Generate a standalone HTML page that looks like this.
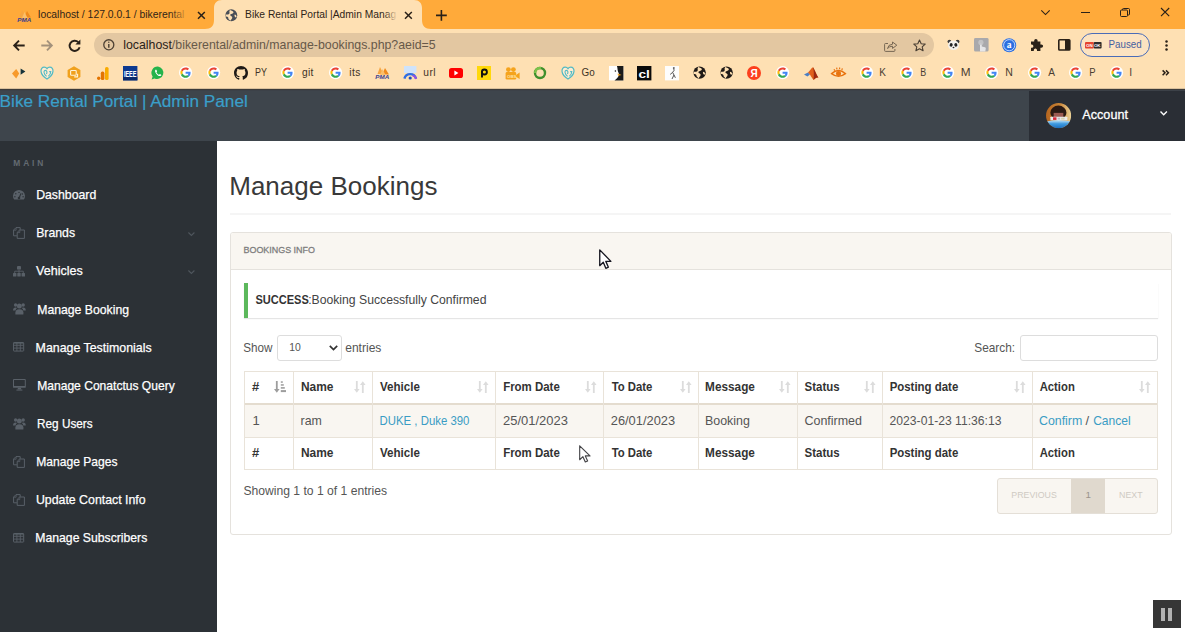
<!DOCTYPE html>
<html lang="en">
<head>
<meta charset="utf-8">
<title>Bike Rental Portal |Admin Manage Bookings</title>
<style>
*{box-sizing:border-box;margin:0;padding:0}
html,body{width:1185px;height:632px;overflow:hidden;background:#fff}
body{font-family:"Liberation Sans",sans-serif;font-size:13px;color:#444;position:relative}
.t{position:absolute;white-space:nowrap;transform-origin:0 50%;display:block}
.a{position:absolute}
svg{position:absolute;overflow:visible}
#tabbar{left:0;top:0;width:1185px;height:29px;background:#ffaa3a}
#toolbar{left:0;top:29px;width:1185px;height:59px;background:#fee0b3}
#chromeline{left:0;top:88px;width:1185px;height:3px;background:linear-gradient(#d9c09c 0,#d9c09c 33.3%,#3b3a39 33.3%,#3b3a39 66.6%,#3c4148 66.6%)}
#brand{left:0;top:89px;width:1185px;height:52px;background:#3e454c}
#acct{left:1029px;top:89px;width:156px;height:52px;background:#2a2e35}
#side{left:0;top:141px;width:217px;height:491px;background:#2c3136}
.vl{position:absolute;width:1px;background:#e9e3d9;top:371px;height:99px}
.hl{position:absolute;height:1px;background:#e9e3d9;left:244px;width:914px}
</style>
</head>
<body>
<div id="browser-chrome">
<div class="a" id="tabbar"></div><div class="a" id="toolbar"></div>
<svg style="left:205px;top:0" width="226" height="29" viewBox="0 0 226 29"><path d="M0 29 C6 29 9 26 9 20 L9 8 C9 3 12 0 17 0 L209 0 C214 0 217 3 217 8 L217 20 C217 26 220 29 226 29 Z" fill="#fee0b3"/></svg>
<span class="t" style="left:38px;top:9.41px;font-size:10.5px;line-height:10.5px;color:#2f2418;transform:translateX(0.08px) scaleX(0.9869);">localhost / 127.0.0.1 / bikerental</span>
<span class="t" style="left:245px;top:9.41px;font-size:10.5px;line-height:10.5px;color:#2f2418;transform:translateX(0.05px) scaleX(0.9779);">Bike Rental Portal |Admin Manag</span>
<div class="a" style="left:170px;top:6px;width:22px;height:18px;background:linear-gradient(90deg,rgba(255,170,58,0),#ffaa3a 85%)"></div>
<div class="a" style="left:384px;top:6px;width:15px;height:18px;background:linear-gradient(90deg,rgba(254,224,179,0),#fee0b3 90%)"></div>
<svg style="left:17px;top:9.5px" width="15" height="12" viewBox="0 0 15 12"><path d="M5 0 L8.5 7 L2.5 7Z" fill="#f7a541"/><path d="M10 1 L14 7.5 L7 7.5Z" fill="#f08a1c"/><path d="M7.5 2 L10.5 8 L5 8Z" fill="#fbbf6a"/><text x="0.3" y="11.6" font-family="Liberation Sans,sans-serif" font-size="5.2" font-weight="700" font-style="italic" fill="#3b3f8f" textLength="14" lengthAdjust="spacingAndGlyphs">PMA</text></svg>
<svg style="left:198.0px;top:11.5px" width="6.8" height="6.8" viewBox="0 0 6.8 6.8"><path d="M0 0L6.8 6.8M6.8 0L0 6.8" stroke="#2a2118" stroke-width="1.5" fill="none"/></svg>
<svg style="left:404.90000000000003px;top:11.5px" width="6.8" height="6.8" viewBox="0 0 6.8 6.8"><path d="M0 0L6.8 6.8M6.8 0L0 6.8" stroke="#2a2118" stroke-width="1.5" fill="none"/></svg>
<svg style="left:225.39999999999998px;top:8.7px" width="12.6" height="12.6" viewBox="-7 -7 14 14"><circle r="6.6" fill="#4a4f57"/><path d="M-1.5 -6 C-3 -4 -1 -3 -2.5 -1.5 C-4 -0.5 -5.5 -1.5 -6.4 -0.5 L-6.3 1.5 C-4 1 -3 2.5 -3.2 4 L-1 6.2 C0 4 1.5 3.5 1 1.8 C0 0.5 -1.5 1 -1.2 -0.8 C0 -2 2 -1.5 2.5 -3.5 C2 -5 0.5 -5 -1.5 -6Z M3.8 -1 C3 0.5 4 1.5 5 2.5 L6 1 C5.5 0 5 -1 3.8 -1Z" fill="#fee0b3"/></svg>
<svg style="left:436.3px;top:9.6px" width="10.8" height="10.8" viewBox="0 0 10.8 10.8"><path d="M5.4 0V10.8M0 5.4H10.8" stroke="#2a2118" stroke-width="1.6"/></svg>
<svg style="left:1041px;top:9.6px" width="9" height="5.4" viewBox="0 0 9 5.4"><path d="M0.3 0.4L4.5 4.6L8.7 0.4" stroke="#2a2118" stroke-width="1.1" fill="none"/></svg>
<div class="a" style="left:1081px;top:12px;width:9px;height:1px;background:#2a2118"></div>
<svg style="left:1120px;top:8px" width="10" height="9" viewBox="0 0 10 9"><rect x="0.5" y="2" width="7" height="6.5" rx="1" stroke="#2a2118" fill="none"/><path d="M2.5 2V1.5Q2.5 0.5 3.5 0.5H8.5Q9.5 0.5 9.5 1.5V6Q9.5 7 8.5 7H7.5" stroke="#2a2118" fill="none"/></svg>
<svg style="left:1161.1000000000001px;top:8.3px" width="8.2" height="8.2" viewBox="0 0 8.2 8.2"><path d="M0 0L8.2 8.2M8.2 0L0 8.2" stroke="#2a2118" stroke-width="1.15" fill="none"/></svg>
<svg style="left:13px;top:39.6px" width="12" height="11" viewBox="0 0 12 11"><path d="M11.7 5.5H1.6M6 0.7L1.2 5.5L6 10.3" stroke="#2a2118" stroke-width="1.9" fill="none"/></svg>
<svg style="left:40.7px;top:39.6px" width="12" height="11" viewBox="0 0 12 11"><path d="M0.3 5.5H10.4M6 0.7L10.8 5.5L6 10.3" stroke="#a3917b" stroke-width="1.9" fill="none"/></svg>
<svg style="left:68.3px;top:38.6px" width="13" height="13" viewBox="0 0 13 13"><path d="M10.3 3.2A5.1 5.1 0 1 0 11.6 8.2" stroke="#2a2118" stroke-width="1.9" fill="none"/><path d="M12.4 0.4V5.4H7.4Z" fill="#2a2118"/></svg>
<div class="a" style="left:94px;top:33px;width:840px;height:24px;border-radius:12px;background:#e3c7a1"></div>
<svg style="left:103.4px;top:39.2px" width="11.6" height="11.6" viewBox="0 0 12 12"><circle cx="6" cy="6" r="5.2" stroke="#4e4235" stroke-width="1.35" fill="none"/><path d="M6 5.2V9" stroke="#4e4235" stroke-width="1.5"/><circle cx="6" cy="3.4" r="0.8" fill="#5a4d3e"/></svg>
<span class="t" style="left:123px;top:39.20px;font-size:12.4px;line-height:12.4px;color:#675949;transform:translateX(0.14px) scaleX(0.9959);"><span style="color:#2a2118">localhost</span>/bikerental/admin/manage-bookings.php?aeid=5</span>
<svg style="left:884px;top:39.5px" width="14" height="12" viewBox="0 0 14 12"><path d="M4 3.5H1.5Q0.6 3.5 0.6 4.4V10.5Q0.6 11.4 1.5 11.4H10Q10.9 11.4 10.9 10.5V9" stroke="#776753" stroke-width="1" fill="none"/><path d="M3.5 8.5Q4 4.5 8.5 4.2V2L12.8 5.2L8.5 8.4V6.2Q5.5 6.2 3.5 8.5Z" stroke="#776753" stroke-width="1" fill="none" stroke-linejoin="round"/></svg>
<svg style="left:912.5px;top:38.8px" width="13" height="12.4" viewBox="0 0 13 12.4"><path d="M6.5 1L8.2 4.7L12.2 5.1L9.2 7.8L10.1 11.7L6.5 9.7L2.9 11.7L3.8 7.8L0.8 5.1L4.8 4.7Z" stroke="#4a3f33" stroke-width="1.1" fill="none" stroke-linejoin="round"/></svg>
<svg style="left:946.6px;top:38.9px" width="13" height="11.6" viewBox="0 0 15 13"><circle cx="2.8" cy="2.8" r="2.2" fill="#3a3a3a"/><circle cx="12.2" cy="2.8" r="2.2" fill="#3a3a3a"/><ellipse cx="7.5" cy="7" rx="6.3" ry="5.6" fill="#f4f1ec"/><ellipse cx="4.8" cy="6.6" rx="1.7" ry="2.1" fill="#222" transform="rotate(20 4.8 6.6)"/><ellipse cx="10.2" cy="6.6" rx="1.7" ry="2.1" fill="#222" transform="rotate(-20 10.2 6.6)"/><ellipse cx="7.5" cy="9.6" rx="1.1" ry="0.8" fill="#222"/></svg>
<svg style="left:973.8px;top:38.4px" width="14.6" height="13.6" viewBox="0 0 14.6 13.6"><rect width="14.6" height="13.6" rx="1.5" fill="#a9a9ac"/><path d="M6 13.6V6.2Q6 5.2 6.9 5.2Q7.8 5.2 7.8 6.2V8.4L11 9.2Q12 9.5 11.8 10.6L11.3 13.6Z" fill="#e6e6e8"/><circle cx="6.9" cy="4.4" r="2.6" fill="#c9c9cc" opacity=".8"/></svg>
<svg style="left:1001.8px;top:37.8px" width="14.4" height="14.4" viewBox="0 0 14.4 14.4"><circle cx="7.2" cy="7.2" r="7" fill="#2b6fe0"/><circle cx="7.2" cy="7.2" r="5.6" fill="none" stroke="#cfe0ff" stroke-width="0.9"/><text x="7.2" y="10.3" text-anchor="middle" font-family="Liberation Serif,serif" font-size="9.5" font-weight="700" fill="#fff">a</text></svg>
<svg style="left:1029.5px;top:38.3px" width="14" height="13.6" viewBox="0 0 14 13.6"><path d="M1 3.6H4.2V2.6A1.7 1.7 0 0 1 7.6 2.6V3.6H10.4V6.4H11.4A1.7 1.7 0 0 1 11.4 9.8H10.4V13H7V12A1.6 1.6 0 0 0 3.8 12V13H1V9.8H1.8A1.6 1.6 0 0 0 1.8 6.6H1Z" fill="#2a2118"/></svg>
<svg style="left:1058px;top:39px" width="12.6" height="11.8" viewBox="0 0 12.6 11.8"><rect x="0.8" y="0.8" width="11" height="10.2" rx="0.8" stroke="#2a2118" stroke-width="1.6" fill="none"/><rect x="7" y="0.8" width="4.8" height="10.2" fill="#2a2118"/></svg>
<div class="a" style="left:1080px;top:33px;width:70px;height:24px;border-radius:12px;border:1px solid #4a6cb8;background:#fce3c1"></div>
<svg style="left:1084.6px;top:42px" width="16.6" height="6.4" viewBox="0 0 17 7.4" preserveAspectRatio="none"><rect width="9" height="7.4" rx="1" fill="#e5432d"/><rect x="9" width="8" height="7.4" rx="1" fill="#2b2b2b"/><text x="1" y="5.6" font-family="Liberation Sans,sans-serif" font-size="4.6" font-weight="700" fill="#fff" textLength="15" lengthAdjust="spacingAndGlyphs">ON OK</text></svg>
<span class="t" style="left:1108px;top:39.80px;font-size:10.4px;line-height:10.4px;color:#44609f;transform:translateX(0.59px) scaleX(0.9381);">Paused</span>
<svg style="left:1165px;top:40.4px" width="3" height="11" viewBox="0 0 3 11"><circle cx="1.5" cy="1.4" r="1.25" fill="#2a2118"/><circle cx="1.5" cy="5.5" r="1.25" fill="#2a2118"/><circle cx="1.5" cy="9.6" r="1.25" fill="#2a2118"/></svg>
<svg style="left:12px;top:67.0px" width="14" height="12" viewBox="0 0 14 12"><path d="M0 6.6L4.2 2L7.2 6.6L4.2 11.6Z" fill="#f79a2b"/><path d="M8.6 1.4L13.4 4.6L8.6 7.8Z" fill="#17343b"/></svg>
<svg style="left:39.8px;top:66.0px" width="14" height="14" viewBox="-7 -7 14 14"><path d="M0 6C-8 1.5 -7 -5.8 -2.8 -5.8C-1 -5.8 0 -4.4 0 -4.4C0 -4.4 1 -5.8 2.8 -5.8C7 -5.8 8 1.5 0 6Z" fill="rgba(255,255,255,.4)" stroke="#52bac4" stroke-width="1.2"/><path d="M-0.4 3.4C-3.6 1 -3.6 -2.6 -1.6 -2.6C0 -2.6 0.4 -0.6 -0.6 1M2.2 -1.4H3.8C3.8 0.8 2.8 2.2 1.4 3.2" stroke="#52bac4" stroke-width="1.1" fill="none"/></svg>
<svg style="left:67px;top:65.5px" width="14" height="15" viewBox="-7 -7.5 14 15"><path d="M0 -7.3L6.4 -3.6V3.6L0 7.3L-6.4 3.6V-3.6Z" fill="#f0a11d"/><rect x="-3.4" y="-3" width="5.6" height="4.8" rx="0.8" fill="none" stroke="#fff3d6" stroke-width="1.1"/><path d="M0.2 3.4H3.6V0.2" stroke="#fff3d6" stroke-width="1.1" fill="none"/></svg>
<svg style="left:96.5px;top:66.5px" width="12" height="13" viewBox="0 0 12 13"><rect x="8" y="0" width="3.6" height="13" rx="1.6" fill="#f9ab00"/><rect x="3.8" y="4.6" width="3.6" height="8.4" rx="1.6" fill="#e37400"/><circle cx="1.7" cy="11.3" r="1.7" fill="#e37400"/></svg>
<svg style="left:122.8px;top:65.8px" width="14.4" height="14.4" viewBox="0 0 14.4 14.4"><rect width="14.4" height="14.4" fill="#0c3990"/><rect y="10.6" width="14.4" height="3.8" fill="#0a2a6c"/><text x="0.9" y="10.6" font-family="Liberation Sans,sans-serif" font-size="9.4" font-weight="700" fill="#fff" textLength="12.6" lengthAdjust="spacingAndGlyphs">IEEE</text></svg>
<svg style="left:150.5px;top:66.0px" width="14" height="14" viewBox="-7 -7 14 14"><path d="M0 -6.4A6.2 6.2 0 1 1 -3.4 5.4L-6.4 6.4L-5.4 3.4A6.2 6.2 0 0 1 0 -6.4Z" fill="#25b34b"/><path d="M-2.6 -3.2C-3.6 -2 -2.4 0.6 -0.4 2.2C1.4 3.6 3 3.2 3.4 2L2 1L1 1.8C0 1.4 -1.2 0.2 -1.6 -0.8L-0.9 -1.6L-1.6 -3.2Z" fill="#fff"/></svg>
<svg style="left:179.0px;top:66.4px" width="13.2" height="13.2" viewBox="0 0 13.2 13.2"><circle cx="6.6" cy="6.6" r="6.6" fill="#fff"/><g transform="translate(1.40 1.40) scale(0.2167)"><path fill="#EA4335" d="M24 9.5c3.54 0 6.71 1.22 9.21 3.6l6.85-6.85C35.9 2.38 30.47 0 24 0 14.62 0 6.51 5.38 2.56 13.22l7.98 6.19C12.43 13.72 17.74 9.5 24 9.5z"/><path fill="#4285F4" d="M46.98 24.55c0-1.57-.15-3.09-.38-4.55H24v9.02h12.94c-.58 2.96-2.26 5.48-4.78 7.18l7.73 6c4.51-4.18 7.09-10.36 7.09-17.65z"/><path fill="#FBBC05" d="M10.53 28.59c-.48-1.45-.76-2.99-.76-4.59s.27-3.14.76-4.59l-7.98-6.19C.92 16.46 0 20.12 0 24c0 3.88.92 7.54 2.56 10.78l7.97-6.19z"/><path fill="#34A853" d="M24 48c6.48 0 11.93-2.13 15.89-5.81l-7.73-6c-2.15 1.45-4.92 2.3-8.16 2.3-6.26 0-11.57-4.22-13.47-9.91l-7.98 6.19C6.51 42.62 14.62 48 24 48z"/></g></svg>
<svg style="left:207.1px;top:66.4px" width="13.2" height="13.2" viewBox="0 0 13.2 13.2"><circle cx="6.6" cy="6.6" r="6.6" fill="#fff"/><g transform="translate(1.40 1.40) scale(0.2167)"><path fill="#EA4335" d="M24 9.5c3.54 0 6.71 1.22 9.21 3.6l6.85-6.85C35.9 2.38 30.47 0 24 0 14.62 0 6.51 5.38 2.56 13.22l7.98 6.19C12.43 13.72 17.74 9.5 24 9.5z"/><path fill="#4285F4" d="M46.98 24.55c0-1.57-.15-3.09-.38-4.55H24v9.02h12.94c-.58 2.96-2.26 5.48-4.78 7.18l7.73 6c4.51-4.18 7.09-10.36 7.09-17.65z"/><path fill="#FBBC05" d="M10.53 28.59c-.48-1.45-.76-2.99-.76-4.59s.27-3.14.76-4.59l-7.98-6.19C.92 16.46 0 20.12 0 24c0 3.88.92 7.54 2.56 10.78l7.97-6.19z"/><path fill="#34A853" d="M24 48c6.48 0 11.93-2.13 15.89-5.81l-7.73-6c-2.15 1.45-4.92 2.3-8.16 2.3-6.26 0-11.57-4.22-13.47-9.91l-7.98 6.19C6.51 42.62 14.62 48 24 48z"/></g></svg>
<svg style="left:233.5px;top:66.0px" width="14" height="14" viewBox="0 0 16 16"><path d="M8 0C3.58 0 0 3.58 0 8c0 3.54 2.29 6.53 5.47 7.59.4.07.55-.17.55-.38 0-.19-.01-.82-.01-1.49-2.01.37-2.53-.49-2.69-.94-.09-.23-.48-.94-.82-1.13-.28-.15-.68-.52-.01-.53.63-.01 1.08.58 1.23.82.72 1.21 1.87.87 2.33.66.07-.52.28-.87.51-1.07-1.78-.2-3.64-.89-3.64-3.95 0-.87.31-1.59.82-2.15-.08-.2-.36-1.02.08-2.12 0 0 .67-.21 2.2.82.64-.18 1.32-.27 2-.27s1.36.09 2 .27c1.53-1.04 2.2-.82 2.2-.82.44 1.1.16 1.92.08 2.12.51.56.82 1.27.82 2.15 0 3.07-1.87 3.75-3.65 3.95.29.25.54.73.54 1.48 0 1.07-.01 1.93-.01 2.2 0 .21.15.46.55.38A8.01 8.01 0 0016 8c0-4.42-3.58-8-8-8z" fill="#1f1a17"/></svg>
<span class="t" style="left:255px;top:67.67px;font-size:10.2px;line-height:10.2px;color:#3d3226;transform:translateX(0.05px) scaleX(0.8783);">PY</span>
<svg style="left:281.4px;top:66.4px" width="13.2" height="13.2" viewBox="0 0 13.2 13.2"><circle cx="6.6" cy="6.6" r="6.6" fill="#fff"/><g transform="translate(1.40 1.40) scale(0.2167)"><path fill="#EA4335" d="M24 9.5c3.54 0 6.71 1.22 9.21 3.6l6.85-6.85C35.9 2.38 30.47 0 24 0 14.62 0 6.51 5.38 2.56 13.22l7.98 6.19C12.43 13.72 17.74 9.5 24 9.5z"/><path fill="#4285F4" d="M46.98 24.55c0-1.57-.15-3.09-.38-4.55H24v9.02h12.94c-.58 2.96-2.26 5.48-4.78 7.18l7.73 6c4.51-4.18 7.09-10.36 7.09-17.65z"/><path fill="#FBBC05" d="M10.53 28.59c-.48-1.45-.76-2.99-.76-4.59s.27-3.14.76-4.59l-7.98-6.19C.92 16.46 0 20.12 0 24c0 3.88.92 7.54 2.56 10.78l7.97-6.19z"/><path fill="#34A853" d="M24 48c6.48 0 11.93-2.13 15.89-5.81l-7.73-6c-2.15 1.45-4.92 2.3-8.16 2.3-6.26 0-11.57-4.22-13.47-9.91l-7.98 6.19C6.51 42.62 14.62 48 24 48z"/></g></svg>
<span class="t" style="left:301px;top:67.67px;font-size:10.2px;line-height:10.2px;color:#3d3226;letter-spacing:0.35px;transform:translateX(0.90px);">git</span>
<svg style="left:329.4px;top:66.4px" width="13.2" height="13.2" viewBox="0 0 13.2 13.2"><circle cx="6.6" cy="6.6" r="6.6" fill="#fff"/><g transform="translate(1.40 1.40) scale(0.2167)"><path fill="#EA4335" d="M24 9.5c3.54 0 6.71 1.22 9.21 3.6l6.85-6.85C35.9 2.38 30.47 0 24 0 14.62 0 6.51 5.38 2.56 13.22l7.98 6.19C12.43 13.72 17.74 9.5 24 9.5z"/><path fill="#4285F4" d="M46.98 24.55c0-1.57-.15-3.09-.38-4.55H24v9.02h12.94c-.58 2.96-2.26 5.48-4.78 7.18l7.73 6c4.51-4.18 7.09-10.36 7.09-17.65z"/><path fill="#FBBC05" d="M10.53 28.59c-.48-1.45-.76-2.99-.76-4.59s.27-3.14.76-4.59l-7.98-6.19C.92 16.46 0 20.12 0 24c0 3.88.92 7.54 2.56 10.78l7.97-6.19z"/><path fill="#34A853" d="M24 48c6.48 0 11.93-2.13 15.89-5.81l-7.73-6c-2.15 1.45-4.92 2.3-8.16 2.3-6.26 0-11.57-4.22-13.47-9.91l-7.98 6.19C6.51 42.62 14.62 48 24 48z"/></g></svg>
<span class="t" style="left:349px;top:67.67px;font-size:10.2px;line-height:10.2px;color:#3d3226;letter-spacing:0.45px;transform:translateX(0.20px);">its</span>
<svg style="left:374.5px;top:66.7px" width="15" height="12" viewBox="0 0 15 12"><path d="M5 0 L8.5 7 L2.5 7Z" fill="#f7a541"/><path d="M10 1 L14 7.5 L7 7.5Z" fill="#f08a1c"/><path d="M7.5 2 L10.5 8 L5 8Z" fill="#fbbf6a"/><text x="0.3" y="11.6" font-family="Liberation Sans,sans-serif" font-size="5.2" font-weight="700" font-style="italic" fill="#3b3f8f" textLength="14" lengthAdjust="spacingAndGlyphs">PMA</text></svg>
<svg style="left:402.5px;top:66.0px" width="14.4" height="14" viewBox="0 0 14.4 14"><rect x="1" y="0" width="12.4" height="7" fill="#cfe3fb"/><path d="M1.4 12.6A6 6 0 0 1 13 12.6" stroke="#2f6fe4" stroke-width="2.4" fill="none"/><path d="M9.6 9.4A5.6 5.6 0 0 1 13.2 13" stroke="#9b4de0" stroke-width="2" fill="none"/><circle cx="7.2" cy="12" r="1.6" fill="#1c4fc0"/></svg>
<span class="t" style="left:423px;top:67.67px;font-size:10.2px;line-height:10.2px;color:#3d3226;letter-spacing:0.45px;transform:translateX(0.30px);">url</span>
<svg style="left:449px;top:68.0px" width="14" height="10" viewBox="0 0 14 10"><rect width="14" height="10" rx="2.6" fill="#f00"/><path d="M5.4 2.6L9.4 5L5.4 7.4Z" fill="#fff"/></svg>
<svg style="left:477px;top:66.0px" width="14" height="14" viewBox="0 0 14 14"><rect width="14" height="14" fill="#ffd80a"/><circle cx="7.4" cy="6" r="2.5" fill="none" stroke="#111" stroke-width="1.9"/><path d="M5 5V11.4" stroke="#111" stroke-width="1.9"/></svg>
<svg style="left:504.5px;top:66.5px" width="15" height="13" viewBox="0 0 15 13"><circle cx="3.4" cy="2.6" r="2.4" fill="#f5a31c"/><circle cx="8.4" cy="2.6" r="2.4" fill="#f5a31c"/><rect x="0.6" y="5" width="10.6" height="7.6" rx="1.4" fill="#f5a31c"/><path d="M11 8L14.6 5.6V12L11 9.8Z" fill="#f5a31c"/><text x="2" y="11" font-family="Liberation Sans,sans-serif" font-size="4.4" font-weight="700" fill="#ffe2a6">OBS</text></svg>
<svg style="left:532.5px;top:66.0px" width="14" height="14" viewBox="-7 -7 14 14"><circle r="5" fill="none" stroke="#3f8f2c" stroke-width="2.4"/><path d="M-5 0A5 5 0 0 1 1 -4.9" stroke="#7cc24a" stroke-width="2.4" fill="none"/></svg>
<svg style="left:560.5px;top:66.0px" width="14" height="14" viewBox="-7 -7 14 14"><path d="M0 6C-8 1.5 -7 -5.8 -2.8 -5.8C-1 -5.8 0 -4.4 0 -4.4C0 -4.4 1 -5.8 2.8 -5.8C7 -5.8 8 1.5 0 6Z" fill="rgba(255,255,255,.4)" stroke="#52bac4" stroke-width="1.2"/><path d="M-0.4 3.4C-3.6 1 -3.6 -2.6 -1.6 -2.6C0 -2.6 0.4 -0.6 -0.6 1M2.2 -1.4H3.8C3.8 0.8 2.8 2.2 1.4 3.2" stroke="#52bac4" stroke-width="1.1" fill="none"/></svg>
<span class="t" style="left:581px;top:67.67px;font-size:10.2px;line-height:10.2px;color:#3d3226;transform:translateX(0.47px) scaleX(0.9713);">Go</span>
<svg style="left:609px;top:65.8px" width="14.4" height="14.4" viewBox="0 0 14.4 14.4"><rect width="14.4" height="14.4" fill="#fff"/><path d="M8 0H14.4V14.4H5.5C9 12 11 9 9.4 6.4C8.4 4.6 8.6 2 8 0Z" fill="#1a1a1a"/><path d="M8.6 7.4L12.6 9L9 9.8Z" fill="#f5a623"/><circle cx="6.4" cy="5" r="0.8" fill="#1a1a1a"/></svg>
<svg style="left:636.8px;top:65.8px" width="14.4" height="14.4" viewBox="0 0 14.4 14.4"><rect width="14.4" height="14.4" fill="#0a0a0a"/><text x="1.4" y="11.6" font-family="Liberation Sans,sans-serif" font-size="11.5" font-weight="700" fill="#fff" textLength="11.4" lengthAdjust="spacingAndGlyphs">cl</text></svg>
<svg style="left:664.6px;top:65.8px" width="14" height="14.4" viewBox="0 0 14 14.4"><rect width="14" height="14.4" fill="#fdfdfd"/><path d="M8.4 2.2L9.2 4.2L7.6 6.4L9 9L7 13M7.6 6.4L5.2 8.4M9 9L10.4 11.8" stroke="#555" stroke-width="1" fill="none"/><circle cx="8.8" cy="2" r="1" fill="#666"/></svg>
<svg style="left:692.6px;top:66.4px" width="13.2" height="13.2" viewBox="-7 -7 14 14"><circle r="6.6" fill="#1f1a17"/><path d="M-1.5 -6 C-3 -4 -1 -3 -2.5 -1.5 C-4 -0.5 -5.5 -1.5 -6.4 -0.5 L-6.3 1.5 C-4 1 -3 2.5 -3.2 4 L-1 6.2 C0 4 1.5 3.5 1 1.8 C0 0.5 -1.5 1 -1.2 -0.8 C0 -2 2 -1.5 2.5 -3.5 C2 -5 0.5 -5 -1.5 -6Z M3.8 -1 C3 0.5 4 1.5 5 2.5 L6 1 C5.5 0 5 -1 3.8 -1Z" fill="#fee0b3"/></svg>
<svg style="left:720.4px;top:66.4px" width="13.2" height="13.2" viewBox="-7 -7 14 14"><circle r="6.6" fill="#1f1a17"/><path d="M-1.5 -6 C-3 -4 -1 -3 -2.5 -1.5 C-4 -0.5 -5.5 -1.5 -6.4 -0.5 L-6.3 1.5 C-4 1 -3 2.5 -3.2 4 L-1 6.2 C0 4 1.5 3.5 1 1.8 C0 0.5 -1.5 1 -1.2 -0.8 C0 -2 2 -1.5 2.5 -3.5 C2 -5 0.5 -5 -1.5 -6Z M3.8 -1 C3 0.5 4 1.5 5 2.5 L6 1 C5.5 0 5 -1 3.8 -1Z" fill="#fee0b3"/></svg>
<svg style="left:747.4px;top:66.0px" width="14" height="14" viewBox="0 0 14 14"><circle cx="7" cy="7" r="7" fill="#fc3f1d"/><text x="7" y="10.8" text-anchor="middle" font-family="Liberation Sans,sans-serif" font-size="10" font-weight="700" fill="#fff">Я</text></svg>
<svg style="left:776.0px;top:66.4px" width="13.2" height="13.2" viewBox="0 0 13.2 13.2"><circle cx="6.6" cy="6.6" r="6.6" fill="#fff"/><g transform="translate(1.40 1.40) scale(0.2167)"><path fill="#EA4335" d="M24 9.5c3.54 0 6.71 1.22 9.21 3.6l6.85-6.85C35.9 2.38 30.47 0 24 0 14.62 0 6.51 5.38 2.56 13.22l7.98 6.19C12.43 13.72 17.74 9.5 24 9.5z"/><path fill="#4285F4" d="M46.98 24.55c0-1.57-.15-3.09-.38-4.55H24v9.02h12.94c-.58 2.96-2.26 5.48-4.78 7.18l7.73 6c4.51-4.18 7.09-10.36 7.09-17.65z"/><path fill="#FBBC05" d="M10.53 28.59c-.48-1.45-.76-2.99-.76-4.59s.27-3.14.76-4.59l-7.98-6.19C.92 16.46 0 20.12 0 24c0 3.88.92 7.54 2.56 10.78l7.97-6.19z"/><path fill="#34A853" d="M24 48c6.48 0 11.93-2.13 15.89-5.81l-7.73-6c-2.15 1.45-4.92 2.3-8.16 2.3-6.26 0-11.57-4.22-13.47-9.91l-7.98 6.19C6.51 42.62 14.62 48 24 48z"/></g></svg>
<svg style="left:803.5px;top:66.5px" width="14.4" height="13" viewBox="0 0 14.4 13"><path d="M0 7.4L4 5.4L6 7.6L3.4 9.6Z" fill="#4b7fc4"/><path d="M4 5.4C6 4 7.4 0.6 9 0.2C10.6 2 12 7 14.4 10.6C12 10 10.6 12 9.6 13C8 11 6.6 9.4 6 7.6Z" fill="#e0601c"/><path d="M9 0.2C10 3 10 8 9.6 13C10.6 12 12 10 14.4 10.6C12 7 10.6 2 9 0.2Z" fill="#9b2a12"/></svg>
<svg style="left:830.5px;top:66.0px" width="15" height="13" viewBox="0 0 15 13"><path d="M0.6 7.6Q7.5 1.6 14.4 7.6Q7.5 13 0.6 7.6Z" fill="none" stroke="#e8730f" stroke-width="1.4"/><circle cx="7.5" cy="7.4" r="2.5" fill="#e8730f"/><path d="M3 3.2L3.8 4.6M5.6 1.6L6 3.4M8.6 1.4L8.6 3.2M11.4 2.4L10.8 4" stroke="#e8730f" stroke-width="1.2"/></svg>
<svg style="left:859.7px;top:66.4px" width="13.2" height="13.2" viewBox="0 0 13.2 13.2"><circle cx="6.6" cy="6.6" r="6.6" fill="#fff"/><g transform="translate(1.40 1.40) scale(0.2167)"><path fill="#EA4335" d="M24 9.5c3.54 0 6.71 1.22 9.21 3.6l6.85-6.85C35.9 2.38 30.47 0 24 0 14.62 0 6.51 5.38 2.56 13.22l7.98 6.19C12.43 13.72 17.74 9.5 24 9.5z"/><path fill="#4285F4" d="M46.98 24.55c0-1.57-.15-3.09-.38-4.55H24v9.02h12.94c-.58 2.96-2.26 5.48-4.78 7.18l7.73 6c4.51-4.18 7.09-10.36 7.09-17.65z"/><path fill="#FBBC05" d="M10.53 28.59c-.48-1.45-.76-2.99-.76-4.59s.27-3.14.76-4.59l-7.98-6.19C.92 16.46 0 20.12 0 24c0 3.88.92 7.54 2.56 10.78l7.97-6.19z"/><path fill="#34A853" d="M24 48c6.48 0 11.93-2.13 15.89-5.81l-7.73-6c-2.15 1.45-4.92 2.3-8.16 2.3-6.26 0-11.57-4.22-13.47-9.91l-7.98 6.19C6.51 42.62 14.62 48 24 48z"/></g></svg>
<span class="t" style="left:879px;top:67.58px;font-size:10.3px;line-height:10.3px;color:#4a3e32;transform:translateX(0.23px) scaleX(0.9692);">K</span>
<svg style="left:900.3px;top:66.4px" width="13.2" height="13.2" viewBox="0 0 13.2 13.2"><circle cx="6.6" cy="6.6" r="6.6" fill="#fff"/><g transform="translate(1.40 1.40) scale(0.2167)"><path fill="#EA4335" d="M24 9.5c3.54 0 6.71 1.22 9.21 3.6l6.85-6.85C35.9 2.38 30.47 0 24 0 14.62 0 6.51 5.38 2.56 13.22l7.98 6.19C12.43 13.72 17.74 9.5 24 9.5z"/><path fill="#4285F4" d="M46.98 24.55c0-1.57-.15-3.09-.38-4.55H24v9.02h12.94c-.58 2.96-2.26 5.48-4.78 7.18l7.73 6c4.51-4.18 7.09-10.36 7.09-17.65z"/><path fill="#FBBC05" d="M10.53 28.59c-.48-1.45-.76-2.99-.76-4.59s.27-3.14.76-4.59l-7.98-6.19C.92 16.46 0 20.12 0 24c0 3.88.92 7.54 2.56 10.78l7.97-6.19z"/><path fill="#34A853" d="M24 48c6.48 0 11.93-2.13 15.89-5.81l-7.73-6c-2.15 1.45-4.92 2.3-8.16 2.3-6.26 0-11.57-4.22-13.47-9.91l-7.98 6.19C6.51 42.62 14.62 48 24 48z"/></g></svg>
<span class="t" style="left:920px;top:67.58px;font-size:10.3px;line-height:10.3px;color:#4a3e32;transform:translateX(0.16px) scaleX(0.8665);">B</span>
<svg style="left:940.9px;top:66.4px" width="13.2" height="13.2" viewBox="0 0 13.2 13.2"><circle cx="6.6" cy="6.6" r="6.6" fill="#fff"/><g transform="translate(1.40 1.40) scale(0.2167)"><path fill="#EA4335" d="M24 9.5c3.54 0 6.71 1.22 9.21 3.6l6.85-6.85C35.9 2.38 30.47 0 24 0 14.62 0 6.51 5.38 2.56 13.22l7.98 6.19C12.43 13.72 17.74 9.5 24 9.5z"/><path fill="#4285F4" d="M46.98 24.55c0-1.57-.15-3.09-.38-4.55H24v9.02h12.94c-.58 2.96-2.26 5.48-4.78 7.18l7.73 6c4.51-4.18 7.09-10.36 7.09-17.65z"/><path fill="#FBBC05" d="M10.53 28.59c-.48-1.45-.76-2.99-.76-4.59s.27-3.14.76-4.59l-7.98-6.19C.92 16.46 0 20.12 0 24c0 3.88.92 7.54 2.56 10.78l7.97-6.19z"/><path fill="#34A853" d="M24 48c6.48 0 11.93-2.13 15.89-5.81l-7.73-6c-2.15 1.45-4.92 2.3-8.16 2.3-6.26 0-11.57-4.22-13.47-9.91l-7.98 6.19C6.51 42.62 14.62 48 24 48z"/></g></svg>
<span class="t" style="left:960px;top:67.58px;font-size:10.3px;line-height:10.3px;color:#4a3e32;transform:translateX(0.85px) scaleX(1.1415);">M</span>
<svg style="left:984.7px;top:66.4px" width="13.2" height="13.2" viewBox="0 0 13.2 13.2"><circle cx="6.6" cy="6.6" r="6.6" fill="#fff"/><g transform="translate(1.40 1.40) scale(0.2167)"><path fill="#EA4335" d="M24 9.5c3.54 0 6.71 1.22 9.21 3.6l6.85-6.85C35.9 2.38 30.47 0 24 0 14.62 0 6.51 5.38 2.56 13.22l7.98 6.19C12.43 13.72 17.74 9.5 24 9.5z"/><path fill="#4285F4" d="M46.98 24.55c0-1.57-.15-3.09-.38-4.55H24v9.02h12.94c-.58 2.96-2.26 5.48-4.78 7.18l7.73 6c4.51-4.18 7.09-10.36 7.09-17.65z"/><path fill="#FBBC05" d="M10.53 28.59c-.48-1.45-.76-2.99-.76-4.59s.27-3.14.76-4.59l-7.98-6.19C.92 16.46 0 20.12 0 24c0 3.88.92 7.54 2.56 10.78l7.97-6.19z"/><path fill="#34A853" d="M24 48c6.48 0 11.93-2.13 15.89-5.81l-7.73-6c-2.15 1.45-4.92 2.3-8.16 2.3-6.26 0-11.57-4.22-13.47-9.91l-7.98 6.19C6.51 42.62 14.62 48 24 48z"/></g></svg>
<span class="t" style="left:1005px;top:67.58px;font-size:10.3px;line-height:10.3px;color:#4a3e32;transform:translateX(0.17px) scaleX(1.0210);">N</span>
<svg style="left:1027.6px;top:66.4px" width="13.2" height="13.2" viewBox="0 0 13.2 13.2"><circle cx="6.6" cy="6.6" r="6.6" fill="#fff"/><g transform="translate(1.40 1.40) scale(0.2167)"><path fill="#EA4335" d="M24 9.5c3.54 0 6.71 1.22 9.21 3.6l6.85-6.85C35.9 2.38 30.47 0 24 0 14.62 0 6.51 5.38 2.56 13.22l7.98 6.19C12.43 13.72 17.74 9.5 24 9.5z"/><path fill="#4285F4" d="M46.98 24.55c0-1.57-.15-3.09-.38-4.55H24v9.02h12.94c-.58 2.96-2.26 5.48-4.78 7.18l7.73 6c4.51-4.18 7.09-10.36 7.09-17.65z"/><path fill="#FBBC05" d="M10.53 28.59c-.48-1.45-.76-2.99-.76-4.59s.27-3.14.76-4.59l-7.98-6.19C.92 16.46 0 20.12 0 24c0 3.88.92 7.54 2.56 10.78l7.97-6.19z"/><path fill="#34A853" d="M24 48c6.48 0 11.93-2.13 15.89-5.81l-7.73-6c-2.15 1.45-4.92 2.3-8.16 2.3-6.26 0-11.57-4.22-13.47-9.91l-7.98 6.19C6.51 42.62 14.62 48 24 48z"/></g></svg>
<span class="t" style="left:1048px;top:67.58px;font-size:10.3px;line-height:10.3px;color:#4a3e32;transform:translateX(0.19px) scaleX(0.9753);">A</span>
<svg style="left:1069.3px;top:66.4px" width="13.2" height="13.2" viewBox="0 0 13.2 13.2"><circle cx="6.6" cy="6.6" r="6.6" fill="#fff"/><g transform="translate(1.40 1.40) scale(0.2167)"><path fill="#EA4335" d="M24 9.5c3.54 0 6.71 1.22 9.21 3.6l6.85-6.85C35.9 2.38 30.47 0 24 0 14.62 0 6.51 5.38 2.56 13.22l7.98 6.19C12.43 13.72 17.74 9.5 24 9.5z"/><path fill="#4285F4" d="M46.98 24.55c0-1.57-.15-3.09-.38-4.55H24v9.02h12.94c-.58 2.96-2.26 5.48-4.78 7.18l7.73 6c4.51-4.18 7.09-10.36 7.09-17.65z"/><path fill="#FBBC05" d="M10.53 28.59c-.48-1.45-.76-2.99-.76-4.59s.27-3.14.76-4.59l-7.98-6.19C.92 16.46 0 20.12 0 24c0 3.88.92 7.54 2.56 10.78l7.97-6.19z"/><path fill="#34A853" d="M24 48c6.48 0 11.93-2.13 15.89-5.81l-7.73-6c-2.15 1.45-4.92 2.3-8.16 2.3-6.26 0-11.57-4.22-13.47-9.91l-7.98 6.19C6.51 42.62 14.62 48 24 48z"/></g></svg>
<span class="t" style="left:1089px;top:67.58px;font-size:10.3px;line-height:10.3px;color:#4a3e32;transform:translateX(0.31px) scaleX(0.9180);">P</span>
<svg style="left:1110.2px;top:66.4px" width="13.2" height="13.2" viewBox="0 0 13.2 13.2"><circle cx="6.6" cy="6.6" r="6.6" fill="#fff"/><g transform="translate(1.40 1.40) scale(0.2167)"><path fill="#EA4335" d="M24 9.5c3.54 0 6.71 1.22 9.21 3.6l6.85-6.85C35.9 2.38 30.47 0 24 0 14.62 0 6.51 5.38 2.56 13.22l7.98 6.19C12.43 13.72 17.74 9.5 24 9.5z"/><path fill="#4285F4" d="M46.98 24.55c0-1.57-.15-3.09-.38-4.55H24v9.02h12.94c-.58 2.96-2.26 5.48-4.78 7.18l7.73 6c4.51-4.18 7.09-10.36 7.09-17.65z"/><path fill="#FBBC05" d="M10.53 28.59c-.48-1.45-.76-2.99-.76-4.59s.27-3.14.76-4.59l-7.98-6.19C.92 16.46 0 20.12 0 24c0 3.88.92 7.54 2.56 10.78l7.97-6.19z"/><path fill="#34A853" d="M24 48c6.48 0 11.93-2.13 15.89-5.81l-7.73-6c-2.15 1.45-4.92 2.3-8.16 2.3-6.26 0-11.57-4.22-13.47-9.91l-7.98 6.19C6.51 42.62 14.62 48 24 48z"/></g></svg>
<span class="t" style="left:1129px;top:67.58px;font-size:10.3px;line-height:10.3px;color:#4a3e32;transform:translateX(0.90px);transform:translateX(0.3px);">I</span>
<svg style="left:1161.6px;top:70.3px" width="7" height="5.6" viewBox="0 0 7 5.6"><path d="M0.6 0.4L3 2.8L0.6 5.2M4 0.4L6.4 2.8L4 5.2" stroke="#2a2118" stroke-width="1.5" fill="none"/></svg>
</div>
<header>
<div class="a" id="brand"></div><div class="a" id="acct"></div><div class="a" id="chromeline"></div>
<span class="t" style="left:-1px;top:93.31px;font-size:17px;line-height:17px;color:#3a9fc9;transform:translateX(0.61px) scaleX(1.0114);-webkit-text-stroke:0.2px #3a9fc9;">Bike Rental Portal | Admin Panel</span>
<svg style="left:1045.8px;top:103px" width="25.2" height="25.2" viewBox="0 0 25 25"><defs><clipPath id="av"><circle cx="12.5" cy="12.5" r="12.5"/></clipPath><linearGradient id="avb" x1="0" y1="0" x2="0" y2="1"><stop offset="0" stop-color="#cfeaf7"/><stop offset=".45" stop-color="#3f9be0"/><stop offset="1" stop-color="#1b6fc0"/></linearGradient><linearGradient id="avr" x1="0" y1="0" x2="1" y2="0"><stop offset="0" stop-color="#b5651f"/><stop offset=".55" stop-color="#c98436"/><stop offset="1" stop-color="#ecd49a"/></linearGradient></defs><g clip-path="url(#av)"><rect width="25" height="25" fill="url(#avr)"/><ellipse cx="12.3" cy="9.6" rx="8" ry="7" fill="#2b1a14"/><rect x="7.6" y="9.8" width="9.6" height="4.4" fill="#9a5a52"/><rect x="4.4" y="13.6" width="16.8" height="3.6" rx="0.6" fill="#eceaea"/><rect x="7" y="14.2" width="3.4" height="2.6" fill="#d8283a"/><rect x="11.6" y="14.6" width="2.4" height="1.8" fill="#b9bcc6"/><rect x="15" y="14.6" width="3.4" height="1.8" fill="#d9d2b0"/><path d="M0 18.4Q12.5 15.4 25 18.4V25H0Z" fill="url(#avb)"/></g></svg>
<span class="t" style="left:1082px;top:108.00px;font-size:13px;line-height:13px;color:#fff;transform:translateX(0.34px) scaleX(0.9701);-webkit-text-stroke:0.3px #fff;">Account</span>
<svg style="left:1160.2px;top:111px" width="7.4" height="4.8" viewBox="0 0 7.4 4.8"><path d="M0.5 0.6L3.7 3.8L6.9 0.6" stroke="#fff" stroke-width="1.4" fill="none"/></svg>
</header>
<nav>
<div class="a" id="side"></div>
<span class="t" style="left:13px;top:158.79px;font-size:8.4px;line-height:8.4px;color:#646b72;font-weight:700;letter-spacing:2.85px;transform:translateX(0.30px);">MAIN</span>
<svg style="left:13.3px;top:189.6px" width="12" height="9.6" viewBox="0 0 12 9.6"><path d="M1.2 9.6A6 6 0 1 1 10.8 9.6Z" fill="#596068"/><path d="M6 8.2L8 3.4" stroke="#2c3136" stroke-width="1.1"/><circle cx="6" cy="2.4" r="0.7" fill="#2c3136"/><circle cx="2.8" cy="3.8" r="0.7" fill="#2c3136"/><circle cx="9.4" cy="4" r="0.7" fill="#2c3136"/><circle cx="1.9" cy="6.8" r="0.7" fill="#2c3136"/><circle cx="10.1" cy="6.8" r="0.7" fill="#2c3136"/><circle cx="6" cy="8" r="1.3" fill="#2c3136"/></svg>
<span class="t" style="left:36px;top:188.20px;font-size:13px;line-height:13px;color:#fff;transform:translateX(0.13px) scaleX(0.9453);-webkit-text-stroke:0.25px #fff;">Dashboard</span>
<svg style="left:13.3px;top:226.9px" width="12" height="12" viewBox="0 0 12 12"><path d="M3.9 8.8H0.6V3L3 0.6H7.2V2.8" stroke="#596068" stroke-width="1" fill="none"/><path d="M3.1 0.8V3.2H0.8" stroke="#596068" stroke-width="0.8" fill="none"/><path d="M4.2 5.4L6.6 3H11.4V11.4H4.2Z" stroke="#596068" stroke-width="1" fill="none"/><path d="M6.8 3.2V5.6H4.4" stroke="#596068" stroke-width="0.8" fill="none"/></svg>
<span class="t" style="left:36px;top:226.32px;font-size:13px;line-height:13px;color:#fff;transform:translateX(0.13px) scaleX(0.9444);-webkit-text-stroke:0.25px #fff;">Brands</span>
<svg style="left:13.3px;top:266.0px" width="12" height="10.4" viewBox="0 0 12 10.4"><rect x="4" y="0" width="4" height="3.4" rx="0.5" fill="#596068"/><rect x="0" y="7" width="3.4" height="3.4" rx="0.5" fill="#596068"/><rect x="4.3" y="7" width="3.4" height="3.4" rx="0.5" fill="#596068"/><rect x="8.6" y="7" width="3.4" height="3.4" rx="0.5" fill="#596068"/><path d="M6 3.4V7M1.7 7V5.2H10.3V7" stroke="#596068" stroke-width="0.9" fill="none"/></svg>
<span class="t" style="left:36px;top:264.44px;font-size:13px;line-height:13px;color:#fff;transform:translateX(0.12px) scaleX(0.9625);-webkit-text-stroke:0.25px #fff;">Vehicles</span>
<svg style="left:13.3px;top:303.4px" width="12.8" height="11.6" viewBox="0 0 12.8 11.6"><circle cx="2.6" cy="2" r="1.7" fill="#596068"/><circle cx="10.2" cy="2" r="1.7" fill="#596068"/><circle cx="6.4" cy="3" r="2.5" fill="#596068"/><path d="M0 7.4Q0 4.4 2.6 4.4Q3.6 4.4 4 5Q2.6 6 2.6 7.6Z" fill="#596068"/><path d="M12.8 7.4Q12.8 4.4 10.2 4.4Q9.2 4.4 8.8 5Q10.2 6 10.2 7.6Z" fill="#596068"/><path d="M2.4 11.6Q1.6 6.2 6.4 6.2Q11.2 6.2 10.4 11.6Z" fill="#596068"/></svg>
<span class="t" style="left:37px;top:302.56px;font-size:13px;line-height:13px;color:#fff;transform:translateX(0.19px) scaleX(0.9412);-webkit-text-stroke:0.25px #fff;">Manage Booking</span>
<svg style="left:13.3px;top:342.3px" width="11.2" height="9.6" viewBox="0 0 11.2 9.6"><rect x="0.5" y="0.5" width="10.2" height="8.6" rx="0.6" stroke="#596068" fill="none"/><path d="M0.5 3.3H10.7M0.5 6.1H10.7M3.9 0.5V9.1M7.3 0.5V9.1" stroke="#596068" stroke-width="0.9"/><rect x="0.5" y="0.5" width="10.2" height="1.6" fill="#596068" opacity=".6"/></svg>
<span class="t" style="left:35px;top:340.68px;font-size:13px;line-height:13px;color:#fff;transform:translateX(0.58px) scaleX(0.9521);-webkit-text-stroke:0.25px #fff;">Manage Testimonials</span>
<svg style="left:13.3px;top:379.4px" width="12.8" height="11.6" viewBox="0 0 12.8 11.6"><rect x="0" y="0" width="12.8" height="8.8" rx="0.9" fill="#596068"/><rect x="1" y="1" width="10.8" height="6" fill="#2c3136"/><path d="M5 8.8L4.4 10.6H8.4L7.8 8.8Z" fill="#596068"/><rect x="3.4" y="10.6" width="6" height="1" fill="#596068"/></svg>
<span class="t" style="left:37px;top:378.80px;font-size:13px;line-height:13px;color:#fff;transform:translateX(0.21px) scaleX(0.9283);-webkit-text-stroke:0.25px #fff;">Manage Conatctus Query</span>
<svg style="left:13.3px;top:417.7px" width="12.8" height="11.6" viewBox="0 0 12.8 11.6"><circle cx="2.6" cy="2" r="1.7" fill="#596068"/><circle cx="10.2" cy="2" r="1.7" fill="#596068"/><circle cx="6.4" cy="3" r="2.5" fill="#596068"/><path d="M0 7.4Q0 4.4 2.6 4.4Q3.6 4.4 4 5Q2.6 6 2.6 7.6Z" fill="#596068"/><path d="M12.8 7.4Q12.8 4.4 10.2 4.4Q9.2 4.4 8.8 5Q10.2 6 10.2 7.6Z" fill="#596068"/><path d="M2.4 11.6Q1.6 6.2 6.4 6.2Q11.2 6.2 10.4 11.6Z" fill="#596068"/></svg>
<span class="t" style="left:37px;top:416.92px;font-size:13px;line-height:13px;color:#fff;transform:translateX(0.08px) scaleX(0.9038);-webkit-text-stroke:0.25px #fff;">Reg Users</span>
<svg style="left:13.3px;top:455.6px" width="12" height="12" viewBox="0 0 12 12"><path d="M3.9 8.8H0.6V3L3 0.6H7.2V2.8" stroke="#596068" stroke-width="1" fill="none"/><path d="M3.1 0.8V3.2H0.8" stroke="#596068" stroke-width="0.8" fill="none"/><path d="M4.2 5.4L6.6 3H11.4V11.4H4.2Z" stroke="#596068" stroke-width="1" fill="none"/><path d="M6.8 3.2V5.6H4.4" stroke="#596068" stroke-width="0.8" fill="none"/></svg>
<span class="t" style="left:36px;top:455.04px;font-size:13px;line-height:13px;color:#fff;transform:translateX(0.21px) scaleX(0.9288);-webkit-text-stroke:0.25px #fff;">Manage Pages</span>
<svg style="left:13.3px;top:493.8px" width="12" height="12" viewBox="0 0 12 12"><path d="M3.9 8.8H0.6V3L3 0.6H7.2V2.8" stroke="#596068" stroke-width="1" fill="none"/><path d="M3.1 0.8V3.2H0.8" stroke="#596068" stroke-width="0.8" fill="none"/><path d="M4.2 5.4L6.6 3H11.4V11.4H4.2Z" stroke="#596068" stroke-width="1" fill="none"/><path d="M6.8 3.2V5.6H4.4" stroke="#596068" stroke-width="0.8" fill="none"/></svg>
<span class="t" style="left:35px;top:493.16px;font-size:13px;line-height:13px;color:#fff;transform:translateX(0.92px) scaleX(0.9488);-webkit-text-stroke:0.25px #fff;">Update Contact Info</span>
<svg style="left:13.3px;top:532.9px" width="11.2" height="9.6" viewBox="0 0 11.2 9.6"><rect x="0.5" y="0.5" width="10.2" height="8.6" rx="0.6" stroke="#596068" fill="none"/><path d="M0.5 3.3H10.7M0.5 6.1H10.7M3.9 0.5V9.1M7.3 0.5V9.1" stroke="#596068" stroke-width="0.9"/><rect x="0.5" y="0.5" width="10.2" height="1.6" fill="#596068" opacity=".6"/></svg>
<span class="t" style="left:35px;top:531.28px;font-size:13px;line-height:13px;color:#fff;transform:translateX(0.30px) scaleX(0.9392);-webkit-text-stroke:0.25px #fff;">Manage Subscribers</span>
<svg style="left:187.9px;top:231.6px" width="6.8" height="4.4" viewBox="0 0 6.8 4.4"><path d="M0.4 0.5L3.4 3.5L6.4 0.5" stroke="#4f565d" stroke-width="1.1" fill="none"/></svg>
<svg style="left:187.9px;top:269.7px" width="6.8" height="4.4" viewBox="0 0 6.8 4.4"><path d="M0.4 0.5L3.4 3.5L6.4 0.5" stroke="#4f565d" stroke-width="1.1" fill="none"/></svg>
</nav>
<main>
<span class="t" style="left:229px;top:172.99px;font-size:26px;line-height:26px;color:#393939;transform:translateX(0.24px);">Manage Bookings</span>
<div class="a" style="left:230px;top:213px;width:941px;height:2px;background:#f5f5f5"></div>
<div class="a" style="left:230px;top:232px;width:942px;height:303px;border:1px solid #e5e2dd;border-radius:3px;background:#fff"></div>
<div class="a" style="left:231px;top:233px;width:940px;height:37px;background:#f9f6f1;border-bottom:1px solid #e5e2dd;border-radius:2px 2px 0 0"></div>
<span class="t" style="left:243px;top:245.17px;font-size:9.6px;line-height:9.6px;color:#7d7d7d;transform:translateX(0.49px) scaleX(0.9308);-webkit-text-stroke:0.3px #7d7d7d;">BOOKINGS INFO</span>
<div class="a" style="left:244px;top:283px;width:914px;height:35px;background:#fff;border-left:4px solid #5cb85c;box-shadow:0 1px 1px 0 rgba(0,0,0,.1)"></div>
<span class="t" style="left:255px;top:293.20px;font-size:13px;line-height:13px;color:#333;font-weight:700;transform:translateX(0.38px) scaleX(0.8509);">SUCCESS</span>
<span class="t" style="left:308px;top:293.20px;font-size:13px;line-height:13px;color:#444;transform:translateX(0.17px) scaleX(0.9381);">:Booking Successfully Confirmed</span>
<span class="t" style="left:243px;top:340.50px;font-size:13px;line-height:13px;color:#555;transform:translateX(0.28px) scaleX(0.8987);">Show</span>
<div class="a" style="left:277px;top:335px;width:64.5px;height:26px;border:1px solid #ddd;border-radius:3px;background:#fff"></div>
<span class="t" style="left:289px;top:342.43px;font-size:10.6px;line-height:10.6px;color:#555;transform:translateX(0.13px) scaleX(0.9806);">10</span>
<svg style="left:328.6px;top:345.2px" width="9" height="6" viewBox="0 0 9 6"><path d="M0.8 0.8L4.5 4.5L8.2 0.8" stroke="#333" stroke-width="1.7" fill="none"/></svg>
<span class="t" style="left:345px;top:340.50px;font-size:13px;line-height:13px;color:#555;transform:translateX(0.17px) scaleX(0.9282);">entries</span>
<span class="t" style="left:974px;top:340.50px;font-size:13px;line-height:13px;color:#555;transform:translateX(0.26px) scaleX(0.9095);">Search:</span>
<div class="a" style="left:1020px;top:335px;width:138px;height:26px;border:1px solid #ddd;border-radius:3px;background:#fff"></div>
<div class="a" style="left:244px;top:405px;width:914px;height:32px;background:#f9f6f1"></div>
<div class="hl" style="top:371px"></div>
<div class="hl" style="top:437px"></div>
<div class="hl" style="top:469px"></div>
<div class="hl" style="top:403px;height:2px;background:#e4dccf"></div>
<div class="vl" style="left:244px"></div>
<div class="vl" style="left:293px"></div>
<div class="vl" style="left:372px"></div>
<div class="vl" style="left:495px"></div>
<div class="vl" style="left:603px"></div>
<div class="vl" style="left:698px"></div>
<div class="vl" style="left:797px"></div>
<div class="vl" style="left:882px"></div>
<div class="vl" style="left:1032px"></div>
<div class="vl" style="left:1157px"></div>
<span class="t" style="left:252px;top:379.80px;font-size:13px;line-height:13px;color:#333;font-weight:700;transform:translateX(0.11px) scaleX(0.9966);">#</span>
<span class="t" style="left:300px;top:379.80px;font-size:13px;line-height:13px;color:#333;font-weight:700;transform:translateX(0.90px) scaleX(0.9170);">Name</span>
<span class="t" style="left:379px;top:379.80px;font-size:13px;line-height:13px;color:#333;font-weight:700;transform:translateX(0.99px) scaleX(0.8901);">Vehicle</span>
<span class="t" style="left:503px;top:379.80px;font-size:13px;line-height:13px;color:#333;font-weight:700;transform:translateX(0.13px) scaleX(0.8817);">From Date</span>
<span class="t" style="left:611px;top:379.80px;font-size:13px;line-height:13px;color:#333;font-weight:700;transform:translateX(0.65px) scaleX(0.8718);">To Date</span>
<span class="t" style="left:705px;top:379.80px;font-size:13px;line-height:13px;color:#333;font-weight:700;transform:translateX(0.11px) scaleX(0.9065);">Message</span>
<span class="t" style="left:804px;top:379.80px;font-size:13px;line-height:13px;color:#333;font-weight:700;transform:translateX(0.55px) scaleX(0.8826);">Status</span>
<span class="t" style="left:889px;top:379.80px;font-size:13px;line-height:13px;color:#333;font-weight:700;transform:translateX(0.63px) scaleX(0.8798);">Posting date</span>
<span class="t" style="left:1039px;top:379.80px;font-size:13px;line-height:13px;color:#333;font-weight:700;transform:translateX(0.72px) scaleX(0.8665);">Action</span>
<span class="t" style="left:252px;top:445.80px;font-size:13px;line-height:13px;color:#333;font-weight:700;transform:translateX(0.11px) scaleX(0.9966);">#</span>
<span class="t" style="left:300px;top:445.80px;font-size:13px;line-height:13px;color:#333;font-weight:700;transform:translateX(0.90px) scaleX(0.9170);">Name</span>
<span class="t" style="left:379px;top:445.80px;font-size:13px;line-height:13px;color:#333;font-weight:700;transform:translateX(0.99px) scaleX(0.8901);">Vehicle</span>
<span class="t" style="left:503px;top:445.80px;font-size:13px;line-height:13px;color:#333;font-weight:700;transform:translateX(0.13px) scaleX(0.8817);">From Date</span>
<span class="t" style="left:611px;top:445.80px;font-size:13px;line-height:13px;color:#333;font-weight:700;transform:translateX(0.65px) scaleX(0.8718);">To Date</span>
<span class="t" style="left:705px;top:445.80px;font-size:13px;line-height:13px;color:#333;font-weight:700;transform:translateX(0.11px) scaleX(0.9065);">Message</span>
<span class="t" style="left:804px;top:445.80px;font-size:13px;line-height:13px;color:#333;font-weight:700;transform:translateX(0.55px) scaleX(0.8826);">Status</span>
<span class="t" style="left:889px;top:445.80px;font-size:13px;line-height:13px;color:#333;font-weight:700;transform:translateX(0.63px) scaleX(0.8798);">Posting date</span>
<span class="t" style="left:1039px;top:445.80px;font-size:13px;line-height:13px;color:#333;font-weight:700;transform:translateX(0.72px) scaleX(0.8665);">Action</span>
<svg style="left:353.5px;top:381px" width="11.6" height="12" viewBox="0 0 11.6 12"><path d="M1.9 0H3.7V8H5.6L2.8 11.8L0 8H1.9Z" fill="#dcdcdc"/><path d="M7.9 12H9.7V4H11.6L8.8 0.2L6 4H7.9Z" fill="#dcdcdc"/></svg>
<svg style="left:476.5px;top:381px" width="11.6" height="12" viewBox="0 0 11.6 12"><path d="M1.9 0H3.7V8H5.6L2.8 11.8L0 8H1.9Z" fill="#dcdcdc"/><path d="M7.9 12H9.7V4H11.6L8.8 0.2L6 4H7.9Z" fill="#dcdcdc"/></svg>
<svg style="left:584.5px;top:381px" width="11.6" height="12" viewBox="0 0 11.6 12"><path d="M1.9 0H3.7V8H5.6L2.8 11.8L0 8H1.9Z" fill="#dcdcdc"/><path d="M7.9 12H9.7V4H11.6L8.8 0.2L6 4H7.9Z" fill="#dcdcdc"/></svg>
<svg style="left:679.5px;top:381px" width="11.6" height="12" viewBox="0 0 11.6 12"><path d="M1.9 0H3.7V8H5.6L2.8 11.8L0 8H1.9Z" fill="#dcdcdc"/><path d="M7.9 12H9.7V4H11.6L8.8 0.2L6 4H7.9Z" fill="#dcdcdc"/></svg>
<svg style="left:778.5px;top:381px" width="11.6" height="12" viewBox="0 0 11.6 12"><path d="M1.9 0H3.7V8H5.6L2.8 11.8L0 8H1.9Z" fill="#dcdcdc"/><path d="M7.9 12H9.7V4H11.6L8.8 0.2L6 4H7.9Z" fill="#dcdcdc"/></svg>
<svg style="left:863.5px;top:381px" width="11.6" height="12" viewBox="0 0 11.6 12"><path d="M1.9 0H3.7V8H5.6L2.8 11.8L0 8H1.9Z" fill="#dcdcdc"/><path d="M7.9 12H9.7V4H11.6L8.8 0.2L6 4H7.9Z" fill="#dcdcdc"/></svg>
<svg style="left:1013.5px;top:381px" width="11.6" height="12" viewBox="0 0 11.6 12"><path d="M1.9 0H3.7V8H5.6L2.8 11.8L0 8H1.9Z" fill="#dcdcdc"/><path d="M7.9 12H9.7V4H11.6L8.8 0.2L6 4H7.9Z" fill="#dcdcdc"/></svg>
<svg style="left:1138.5px;top:381px" width="11.6" height="12" viewBox="0 0 11.6 12"><path d="M1.9 0H3.7V8H5.6L2.8 11.8L0 8H1.9Z" fill="#dcdcdc"/><path d="M7.9 12H9.7V4H11.6L8.8 0.2L6 4H7.9Z" fill="#dcdcdc"/></svg>
<svg style="left:274.4px;top:381px" width="12" height="12" viewBox="0 0 12 12"><path d="M1.9 0H3.7V8H5.6L2.8 11.8L0 8H1.9Z" fill="#9d9d9d"/><rect x="6.8" y="0.3" width="2" height="1.5" fill="#9d9d9d"/><rect x="6.8" y="3.2" width="3" height="1.5" fill="#9d9d9d"/><rect x="6.8" y="6.1" width="4" height="1.6" fill="#9d9d9d"/><rect x="6.8" y="9.1" width="5.2" height="2" fill="#9d9d9d"/></svg>
<span class="t" style="left:252px;top:414.00px;font-size:13px;line-height:13px;color:#555;transform:translateX(0.60px);">1</span>
<span class="t" style="left:300px;top:414.00px;font-size:13px;line-height:13px;color:#555;transform:translateX(0.54px) scaleX(0.9513);">ram</span>
<span class="t" style="left:379px;top:414.00px;font-size:13px;line-height:13px;color:#3a9cc4;transform:translateX(0.59px) scaleX(0.8749);">DUKE , Duke 390</span>
<span class="t" style="left:503px;top:414.00px;font-size:13px;line-height:13px;color:#555;transform:translateX(0.05px) scaleX(0.9966);">25/01/2023</span>
<span class="t" style="left:610px;top:414.00px;font-size:13px;line-height:13px;color:#555;transform:translateX(0.75px) scaleX(0.9888);">26/01/2023</span>
<span class="t" style="left:705px;top:414.00px;font-size:13px;line-height:13px;color:#555;transform:scaleX(0.9557);">Booking</span>
<span class="t" style="left:804px;top:414.00px;font-size:13px;line-height:13px;color:#555;transform:translateX(0.43px) scaleX(0.9601);">Confirmed</span>
<span class="t" style="left:889px;top:414.00px;font-size:13px;line-height:13px;color:#555;transform:translateX(0.61px) scaleX(0.9338);">2023-01-23 11:36:13</span>
<span class="t" style="left:1038px;top:414.00px;font-size:13px;line-height:13px;color:#3a9cc4;transform:translateX(0.94px) scaleX(0.9521);">Confirm</span>
<span class="t" style="left:1085px;top:414.00px;font-size:13px;line-height:13px;color:#555;transform:translateX(0.60px);">/</span>
<span class="t" style="left:1093px;top:414.00px;font-size:13px;line-height:13px;color:#3a9cc4;transform:translateX(0.16px) scaleX(0.9270);">Cancel</span>
<span class="t" style="left:243px;top:483.90px;font-size:13px;line-height:13px;color:#555;transform:translateX(0.44px) scaleX(0.9333);">Showing 1 to 1 of 1 entries</span>
<div class="a" style="left:997px;top:477.5px;width:161px;height:36px;border:1px solid #e4dfd7;border-radius:3px;background:#f9f6f1"></div>
<div class="a" style="left:1071px;top:478.5px;width:34px;height:34px;background:#e0d9ce"></div>
<span class="t" style="left:1011px;top:490.00px;font-size:9.8px;line-height:9.8px;color:#cfcac3;transform:translateX(0.30px) scaleX(0.8978);">PREVIOUS</span>
<span class="t" style="left:1085px;top:490.00px;font-size:9.8px;line-height:9.8px;color:#9a948b;transform:translateX(0.40px);">1</span>
<span class="t" style="left:1119px;top:490.00px;font-size:9.8px;line-height:9.8px;color:#cfcac3;transform:translateX(0.11px) scaleX(0.8989);">NEXT</span>
</main>
<div id="overlay">
<svg style="left:598.6px;top:249.2px" width="12.8" height="20.6" viewBox="0 0 12 19" preserveAspectRatio="none"><path d="M0.7 0.8V15.4L4 12.2L6.4 17.8L8.8 16.8L6.4 11.4H11.2Z" fill="#fff" stroke="#15151f" stroke-width="1.25" stroke-linejoin="round"/></svg>
<svg style="left:578.8px;top:444.6px" width="11.8" height="18.2" viewBox="0 0 12 19" preserveAspectRatio="none"><path d="M0.7 0.8V15.4L4 12.2L6.4 17.8L8.8 16.8L6.4 11.4H11.2Z" fill="#fff" stroke="#454548" stroke-width="1.15" stroke-linejoin="round"/></svg>
<div class="a" style="left:1153px;top:600px;width:28px;height:28px;background:#363636"></div>
<div class="a" style="left:1160.6px;top:608.4px;width:4px;height:12.4px;background:#b2b2b2"></div><div class="a" style="left:1168.3px;top:608.4px;width:4px;height:12.4px;background:#b2b2b2"></div>
</div>
</body>
</html>
